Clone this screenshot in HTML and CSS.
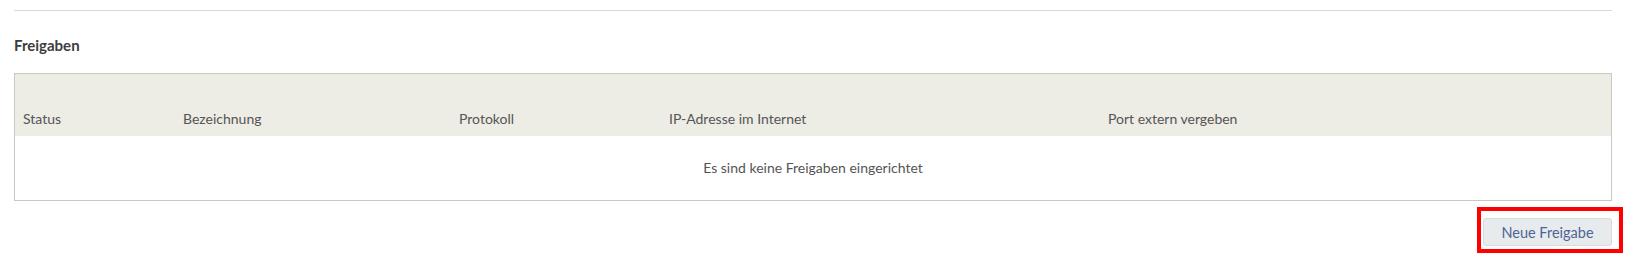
FILE: index.html
```html
<!DOCTYPE html>
<html lang="de">
<head>
<meta charset="utf-8">
<title>Freigaben</title>
<link rel="stylesheet" href="styles.css">
</head>
<body>
<div class="page">
  <hr class="divider">
  <h2 class="section-title">Freigaben</h2>
  <div class="table">
    <div class="thead">
      <div class="th">Status</div>
      <div class="th">Bezeichnung</div>
      <div class="th">Protokoll</div>
      <div class="th">IP-Adresse im Internet</div>
      <div class="th">Port extern vergeben</div>
    </div>
    <div class="empty">Es sind keine Freigaben eingerichtet</div>
  </div>
  <div class="actions">
    <div class="btn-wrap">
      <button class="btn" type="button">Neue Freigabe</button>
      <span class="highlight"></span>
    </div>
  </div>
</div>
</body>
</html>
```

FILE: styles.css
```css
html, body {
  margin: 0;
  padding: 0;
  background: #ffffff;
}
body {
  font-family: Lato, "Source Sans Pro", "Noto Sans", sans-serif;
  font-size: 14px;
  color: #555555;
}
.page {
  padding: 10px 13px 22px 14px;
}
.divider {
  margin: 0;
  border: 0;
  border-top: 1px solid #d9d9d9;
  height: 0;
}
.section-title {
  margin: 24px 0 0 0;
  font-size: 15px;
  line-height: 20px;
  font-weight: 700;
  color: #3d3d3d;
}
.table {
  margin-top: 18px;
  border: 1px solid #c9c9c1;
}
.thead {
  display: grid;
  grid-template-columns: 160px 276px 210px 439px 1fr;
  background: #edece5;
  padding: 35px 0 7px 0;
}
.th {
  padding-left: 8px;
  line-height: 20px;
  color: #555555;
  white-space: nowrap;
}
.empty {
  text-align: center;
  padding: 22px 0;
  line-height: 20px;
  color: #555555;
}
.actions {
  display: flex;
  justify-content: flex-end;
  margin-top: 17px;
}
.btn-wrap {
  position: relative;
  display: flex;
}
.btn {
  width: 129px;
  height: 28px;
  padding: 0;
  font-family: inherit;
  font-size: 14.5px;
  color: #4f6494;
  background: #e7ebee;
  border: 1px solid #d5dbe0;
  border-radius: 3px;
}
.highlight {
  position: absolute;
  left: -6px;
  top: -11px;
  right: -11px;
  bottom: -7px;
  border: 4px solid #ff0000;
  pointer-events: none;
}
```
